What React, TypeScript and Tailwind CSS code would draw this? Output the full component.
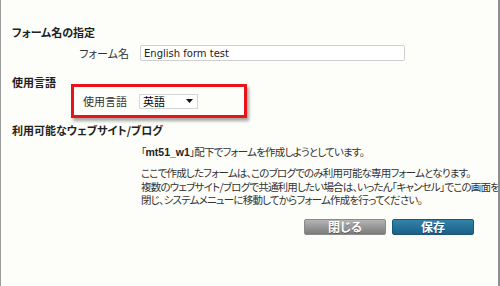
export default function App() {
  const jp = "font-['Noto_Sans_CJK_JP',sans-serif] [font-feature-settings:'palt']";

  return (
    <div className={`flex h-[286px] w-[500px] overflow-hidden bg-[#fdfdf9] text-[#333] ${jp}`}>
      <div className="w-px bg-[#9c9c9c]" />
      <main className="min-w-0 flex-1 pl-[11px] pt-[25px] text-[11px] leading-[14px]">
        <h2 className="font-bold text-[#222]">フォーム名の指定</h2>
        <div className="mt-[6px] flex items-center">
          <label className="w-[117px] text-right">フォーム名</label>
          <input
            defaultValue="English form test"
            className="ml-[11px] h-[16px] w-[265px] rounded-[2px] border border-[#cfcfcf] bg-white px-[3px] font-['DejaVu_Sans',sans-serif] text-[10px] text-[#222] outline-none"
          />
        </div>

        <h2 className="mt-[14px] font-bold text-[#222]">使用言語</h2>
        <div className="ml-[59px] mt-[-5px] flex h-[34px] w-[176px] items-center border-[3px] border-[#e8141a] shadow-[2px_3px_3px_rgba(0,0,0,0.35)]">
          <label className="w-[53px] text-right">使用言語</label>
          <div className="ml-[12px] flex h-[15px] w-[59px] items-center justify-between border border-[#d6d6d6] bg-white pl-[3px] pr-[4px]">
            <span className="text-[11px] leading-[13px] text-black">英語</span>
            <svg width="7" height="4" viewBox="0 0 7 4">
              <path d="M0 0h7L3.5 4z" fill="#111" />
            </svg>
          </div>
        </div>

        <h2 className="mt-[5px] font-bold text-[#222]">利用可能なウェブサイト/ブログ</h2>
        <div className="ml-[129px] mt-[8px] text-[10.5px] tracking-[-0.8px]">
          <p className="leading-[14px]">
            「<b className="font-['Liberation_Sans',sans-serif] tracking-normal text-[#222]">mt51_w1</b>」配下でフォームを作成しようとしています。
          </p>
          <p className="mt-[7px] whitespace-nowrap leading-[13.5px]">
            ここで作成したフォームは、このブログでのみ利用可能な専用フォームとなります。
            <br />
            複数のウェブサイト/ブログで共通利用したい場合は、いったん「キャンセル」でこの画面を
            <br />
            閉じ、システムメニューに移動してからフォーム作成を行ってください。
          </p>
        </div>

        <div className="mt-[12px] flex justify-end gap-[6px] pr-[24px]">
          <button className="h-[16px] w-[82px] rounded-[2px] border border-[#8a8a8a] bg-gradient-to-b from-[#b4b4b4] to-[#7c7c7c] text-[12px] font-bold leading-[14px] text-white [text-shadow:0_1px_0_rgba(0,0,0,0.35)]">
            閉じる
          </button>
          <button className="h-[16px] w-[82px] rounded-[2px] border border-[#1b5878] bg-gradient-to-b from-[#3183aa] to-[#1c6088] text-[12px] font-bold leading-[14px] text-white [text-shadow:0_1px_0_rgba(0,0,0,0.35)]">
            保存
          </button>
        </div>
      </main>
      <div className="w-[2px] bg-[#8e8e8e]" />
    </div>
  );
}
